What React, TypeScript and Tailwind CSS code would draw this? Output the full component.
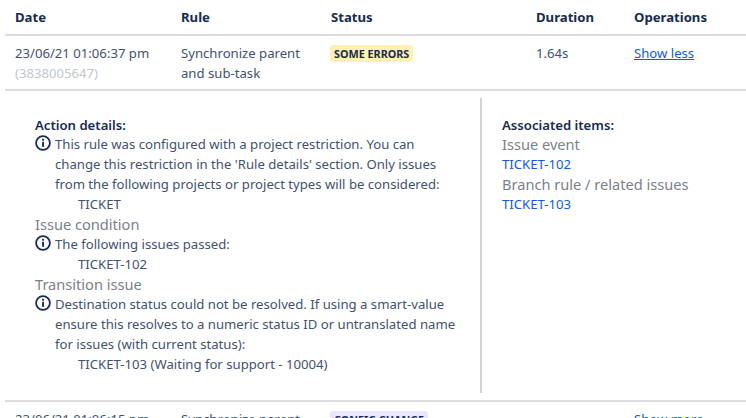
const font = "font-['Noto_Sans','Open_Sans',sans-serif]";

const Info = () => (
  <svg className="absolute left-0 top-[1px] h-4 w-4" viewBox="0 0 16 16" fill="none">
    <circle cx="8" cy="8" r="6.9" stroke="#172b4d" strokeWidth="1.8" />
    <rect x="7.1" y="6.8" width="1.9" height="5" fill="#172b4d" />
    <rect x="7.1" y="3.8" width="1.9" height="1.9" fill="#172b4d" />
  </svg>
);

const Message = ({ lines, item }: { lines: string[]; item: string }) => (
  <div className="relative pl-5">
    <Info />
    {lines.map((line) => (
      <div key={line}>{line}</div>
    ))}
    <div className="pl-[23px]">{item}</div>
  </div>
);

const Row = ({ date, id, status, badge, duration, link }: { date: string; id: string; status: string; badge: string; duration: string; link: string }) => (
  <div className="flex h-[55px] items-start border-b-2 border-[#dcdcdc] pt-[7px] text-[#42526e]">
    <div className="w-[176px] pl-2.5">
      <div className="leading-5">{date}</div>
      <div className="leading-5 text-[#c1c7d0]">{id}</div>
    </div>
    <div className="w-[149px] leading-5">
      Synchronize parent
      <br />
      and sub-task
    </div>
    <div className="w-[206px]">
      <span className={`rounded-[3px] px-1 py-px text-[10.8px] leading-4 font-bold text-[#172b4d] ${badge}`}>{status}</span>
    </div>
    <div className="w-[98px] leading-5">{duration}</div>
    <div className="leading-5 text-[#0f5ae0] underline">{link}</div>
  </div>
);

export default function App() {
  return (
    <div className={`h-[418px] w-[746px] overflow-hidden bg-white pl-[5px] text-[13.15px] leading-5 text-[#172b4d] ${font}`}>
      <div className="flex h-[36px] items-center border-b-2 border-[#dcdcdc] font-bold">
        <div className="w-[176px] pl-2.5">Date</div>
        <div className="w-[150px]">Rule</div>
        <div className="w-[205px]">Status</div>
        <div className="w-[98px]">Duration</div>
        <div>Operations</div>
      </div>
      <Row date="23/06/21 01:06:37 pm" id="(3838005647)" status="SOME ERRORS" badge="bg-[#fff0b3]" duration="1.64s" link="Show less" />
      <div className="flex h-[311px] items-start border-b-2 border-[#dcdcdc] pt-[7px]">
        <div className="h-[295px] w-[477px] border-r-2 border-[#d4d4d4] pt-[19px] pl-[30px]">
          <div className="w-[425px] text-[#42526e]">
            <div className="leading-[17px] font-semibold text-[#172b4d]">Action details:</div>
            <Message
              lines={[
                'This rule was configured with a project restriction. You can',
                "change this restriction in the 'Rule details' section. Only issues",
                'from the following projects or project types will be considered:',
              ]}
              item="TICKET"
            />
            <div className="text-[14.6px] text-[#7a7f8a]">Issue condition</div>
            <Message lines={['The following issues passed:']} item="TICKET-102" />
            <div className="text-[14.6px] text-[#7a7f8a]">Transition issue</div>
            <Message
              lines={[
                'Destination status could not be resolved. If using a smart-value',
                'ensure this resolves to a numeric status ID or untranslated name',
                'for issues (with current status):',
              ]}
              item="TICKET-103 (Waiting for support - 10004)"
            />
          </div>
        </div>
        <div className="pt-[19px] pl-5 text-[#42526e]">
          <div className="leading-[17px] font-semibold text-[#172b4d]">Associated items:</div>
          <div className="text-[14.6px] text-[#7a7f8a]">Issue event</div>
          <div className="text-[#0f5ae0]">TICKET-102</div>
          <div className="text-[14.6px] text-[#7a7f8a]">Branch rule / related issues</div>
          <div className="text-[#0f5ae0]">TICKET-103</div>
        </div>
      </div>
      <Row date="23/06/21 01:06:15 pm" id="(3838005612)" status="CONFIG CHANGE" badge="bg-[#eae6ff]" duration="" link="Show more" />
    </div>
  );
}
